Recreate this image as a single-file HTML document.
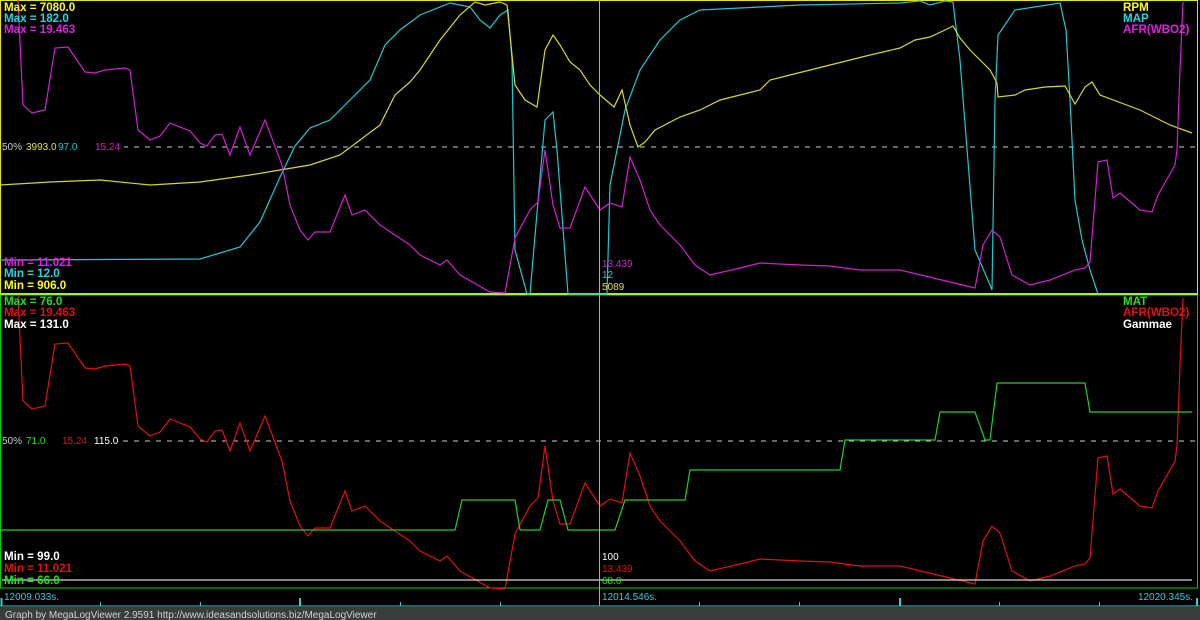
<!DOCTYPE html>
<html><head><meta charset="utf-8"><style>
body{margin:0;background:#000;width:1200px;height:620px;overflow:hidden}
svg{display:block}
text{font-family:"Liberation Sans",Arial,sans-serif}
.b{font-weight:bold;font-size:11.6px}
.s{font-size:10px}
</style></head><body>
<svg width="1200" height="620" viewBox="0 0 1200 620" xmlns="http://www.w3.org/2000/svg">
<rect width="1200" height="620" fill="#000"/>
<rect x="0.5" y="0.5" width="1197" height="293.5" fill="none" stroke="#e6e600" stroke-width="1"/>
<rect x="0.5" y="295" width="1197" height="293" fill="none" stroke="#00d000" stroke-width="1"/>
<line x1="0" y1="294" x2="1198" y2="294" stroke="#a0ff00" stroke-width="2"/>
<line x1="2" y1="147" x2="1196" y2="147" stroke="#ccc" stroke-dasharray="5,6"/>
<line x1="2" y1="441" x2="1196" y2="441" stroke="#ccc" stroke-dasharray="5,6"/>
<polyline fill="none" stroke="#20c8d0" stroke-width="1.2" points="0,260 200,259 240,247 260,222 280,177 295,146 310,128 330,120 350,100 370,80 385,45 400,30 420,15 450,3 470,7 480,20 490,28 500,15 508,10 512,60 515,250 527,294 530,294 545,120 553,112 557,150 568,294 607,294 610,185 625,110 640,70 660,40 680,20 700,10 800,5 900,3 920,1 930,5 945,1 953,2 960,60 975,250 990,285 992,290 995,100 998,35 1015,10 1060,3 1066,30 1070,100 1075,200 1082,240 1090,270 1098,294"/>
<polyline fill="none" stroke="#d8d820" stroke-width="1.2" points="0,185 50,182 100,180 150,185 200,182 250,175 280,170 310,165 340,155 360,140 380,125 395,95 410,82 420,70 440,40 460,15 475,2 485,5 500,2 507,5 515,85 525,100 537,107 545,50 553,35 560,45 570,62 580,70 590,85 600,95 614,107 622,90 630,125 638,147 645,142 655,130 680,117 700,110 720,100 740,95 760,90 770,80 790,75 810,70 830,65 850,60 870,55 900,48 915,40 930,37 945,30 953,26 960,38 970,50 990,70 997,83 998,97 1015,95 1025,90 1045,87 1065,86 1075,104 1085,87 1092,82 1100,95 1140,110 1170,125 1192,133"/>
<polyline fill="none" stroke="#d020d0" stroke-width="1.2" points="18,0 23,105 32,113 45,110 55,48 68,47 85,72 95,73 105,70 125,68 130,70 138,130 150,140 160,136 170,123 190,131 200,143 207,146 215,135 222,134 230,155 240,127 250,155 265,120 282,165 290,205 300,230 308,240 315,232 330,232 345,195 352,215 365,210 380,225 395,235 410,245 420,255 440,265 447,260 460,275 490,292 505,293 515,238 530,210 538,202 545,150 553,205 560,228 570,228 585,187 600,210 610,203 622,207 630,157 640,180 650,210 660,225 680,245 695,265 710,275 740,268 760,263 800,265 830,266 860,270 900,270 950,282 975,288 983,245 992,230 1000,237 1012,275 1030,285 1050,280 1075,270 1085,268 1090,262 1098,162 1107,160 1113,198 1120,193 1140,210 1152,212 1158,195 1175,165 1177,150 1180,70 1183,2"/>
<polyline fill="none" stroke="#e01010" stroke-width="1.2" transform="translate(0,296)" points="18,0 23,105 32,113 45,110 55,48 68,47 85,72 95,73 105,70 125,68 130,70 138,130 150,140 160,136 170,123 190,131 200,143 207,146 215,135 222,134 230,155 240,127 250,155 265,120 282,165 290,205 300,230 308,240 315,232 330,232 345,195 352,215 365,210 380,225 395,235 410,245 420,255 440,265 447,260 460,275 490,292 505,293 515,238 530,210 538,202 545,150 553,205 560,228 570,228 585,187 600,210 610,203 622,207 630,157 640,180 650,210 660,225 680,245 695,265 710,275 740,268 760,263 800,265 830,266 860,270 900,270 950,282 975,288 983,245 992,230 1000,237 1012,275 1030,285 1050,280 1075,270 1085,268 1090,262 1098,162 1107,160 1113,198 1120,193 1140,210 1152,212 1158,195 1175,165 1177,150 1180,70 1183,2"/>
<polyline fill="none" stroke="#20d020" stroke-width="1.2" points="0,530 455,530 462,500 515,500 520,530 540,530 548,500 560,500 568,530 615,530 625,500 685,500 690,470 840,470 845,440 935,440 940,412 975,412 985,440 990,440 997,383 1085,383 1090,412 1192,412"/>
<line x1="2" y1="580" x2="1192" y2="580" stroke="#d8d8d8" stroke-width="1.2"/>
<line x1="599.5" y1="0" x2="599.5" y2="606" stroke="#40d8e0" stroke-width="1"/>
<text x="4" y="11" class="b" fill="#ffff00">Max = 7080.0</text>
<text x="4" y="22" class="b" fill="#20d8e0">Max = 182.0</text>
<text x="4" y="33" class="b" fill="#e020e0">Max = 19.463</text>
<text x="1123" y="11" class="b" fill="#ffff00">RPM</text>
<text x="1123" y="22" class="b" fill="#20d8e0">MAP</text>
<text x="1123" y="33" class="b" fill="#e020e0">AFR(WBO2)</text>
<text x="4" y="266" class="b" fill="#e020e0">Min = 11.021</text>
<text x="4" y="277" class="b" fill="#20d8e0">Min = 12.0</text>
<text x="4" y="289" class="b" fill="#ffff00">Min = 906.0</text>
<rect x="2" y="140" width="122" height="12" fill="#000"/>
<text x="2" y="150" class="s" fill="#ccc">50%</text>
<text x="26" y="150" class="s" fill="#e0e040">3993.0</text>
<text x="58" y="150" class="s" fill="#20c8d0">97.0</text>
<text x="95" y="150" class="s" fill="#d020d0">15.24</text>
<text x="602" y="267" class="s" fill="#d020d0">13.439</text>
<text x="602" y="278" class="s" fill="#20c8d0">12</text>
<text x="602" y="290" class="s" fill="#e0e040">5089</text>
<text x="4" y="305" class="b" fill="#20e020">Max = 76.0</text>
<text x="4" y="316" class="b" fill="#e01010">Max = 19.463</text>
<text x="4" y="328" class="b" fill="#fff">Max = 131.0</text>
<text x="1123" y="305" class="b" fill="#20e020">MAT</text>
<text x="1123" y="316" class="b" fill="#e01010">AFR(WBO2)</text>
<text x="1123" y="328" class="b" fill="#fff">Gammae</text>
<text x="4" y="560" class="b" fill="#fff">Min = 99.0</text>
<text x="4" y="572" class="b" fill="#e01010">Min = 11.021</text>
<text x="4" y="584" class="b" fill="#20e020">Min = 66.0</text>
<rect x="2" y="434" width="118" height="12" fill="#000"/>
<text x="2" y="444" class="s" fill="#ccc">50%</text>
<text x="26" y="444" class="s" fill="#20e020">71.0</text>
<text x="62" y="444" class="s" fill="#e01010">15.24</text>
<text x="94" y="444" class="s" fill="#fff">115.0</text>
<text x="602" y="560" class="s" fill="#fff">100</text>
<text x="602" y="572" class="s" fill="#e01010">13.439</text>
<text x="602" y="584" class="s" fill="#20e020">68.0</text>
<text x="4" y="600" font-size="10" fill="#40c8d0" font-family="Liberation Sans">12009.033s.</text>
<text x="602" y="600" font-size="10" fill="#40c8d0" font-family="Liberation Sans">12014.546s.</text>
<text x="1193" y="600" font-size="10" fill="#40c8d0" text-anchor="end" font-family="Liberation Sans">12020.345s.</text>
<g stroke="#40c8d0" stroke-width="1">
<line x1="1.5" y1="598" x2="1.5" y2="606" stroke-width="2"/>
<line x1="100.5" y1="602" x2="100.5" y2="606"/>
<line x1="200.5" y1="602" x2="200.5" y2="606"/>
<line x1="300" y1="598" x2="300" y2="606" stroke-width="2"/>
<line x1="400.5" y1="602" x2="400.5" y2="606"/>
<line x1="500.5" y1="602" x2="500.5" y2="606"/>
<line x1="699.5" y1="602" x2="699.5" y2="606"/>
<line x1="799.5" y1="602" x2="799.5" y2="606"/>
<line x1="900" y1="598" x2="900" y2="606" stroke-width="2"/>
<line x1="999.5" y1="602" x2="999.5" y2="606"/>
<line x1="1099.5" y1="602" x2="1099.5" y2="606"/>
<line x1="1197" y1="598" x2="1197" y2="606" stroke-width="2"/>
</g>
<line x1="0" y1="606" x2="1200" y2="606" stroke="#40c8d0" stroke-width="1"/>
<rect x="0" y="607" width="1200" height="13" fill="#3a3c3c"/>
<text x="5" y="618" font-size="10" fill="#d0d0d0" font-family="Liberation Sans">Graph by MegaLogViewer 2.9591 http://www.ideasandsolutions.biz/MegaLogViewer</text>
</svg>
</body></html>
